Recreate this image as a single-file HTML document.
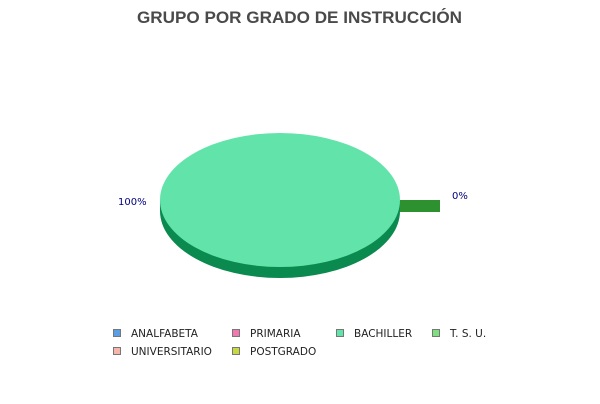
<!DOCTYPE html>
<html><head><style>
body{margin:0;width:600px;height:400px;background:#fff;overflow:hidden;font-family:"DejaVu Sans",sans-serif;}
</style></head><body>
<svg width="600" height="400" xmlns="http://www.w3.org/2000/svg">
<text x="137" y="23" textLength="325" lengthAdjust="spacingAndGlyphs" font-family="Liberation Sans, sans-serif" font-weight="bold" font-size="16.5" fill="#4a4a4a">GRUPO POR GRADO DE INSTRUCCIÓN</text>
<rect x="398" y="200" width="42" height="12" fill="#2e9130"/>
<ellipse cx="280" cy="211" rx="120" ry="67" fill="#0a8a4e"/>
<rect x="160" y="200" width="240" height="11" fill="#0a8a4e"/>
<ellipse cx="280" cy="200" rx="120" ry="67" fill="#62e3a9"/>
<text x="118" y="205" font-size="10" fill="#000080">100%</text>
<text x="452" y="199" font-size="10" fill="#000080">0%</text>
<g font-size="10.5" fill="#222">
<rect x="113.5" y="329.5" width="7" height="7" fill="#5a9fe6" stroke="#777"/>
<text x="131" y="337">ANALFABETA</text>
<rect x="232.5" y="329.5" width="7" height="7" fill="#f07ab0" stroke="#777"/>
<text x="250" y="337">PRIMARIA</text>
<rect x="336.5" y="329.5" width="7" height="7" fill="#62e3a9" stroke="#777"/>
<text x="354" y="337">BACHILLER</text>
<rect x="432.5" y="329.5" width="7" height="7" fill="#7fe07f" stroke="#777"/>
<text x="450" y="337">T. S. U.</text>
<rect x="113.5" y="347.5" width="7" height="7" fill="#f5b5aa" stroke="#777"/>
<text x="131" y="355">UNIVERSITARIO</text>
<rect x="232.5" y="347.5" width="7" height="7" fill="#c8d840" stroke="#777"/>
<text x="250" y="355">POSTGRADO</text>
</g>
</svg>
</body></html>
